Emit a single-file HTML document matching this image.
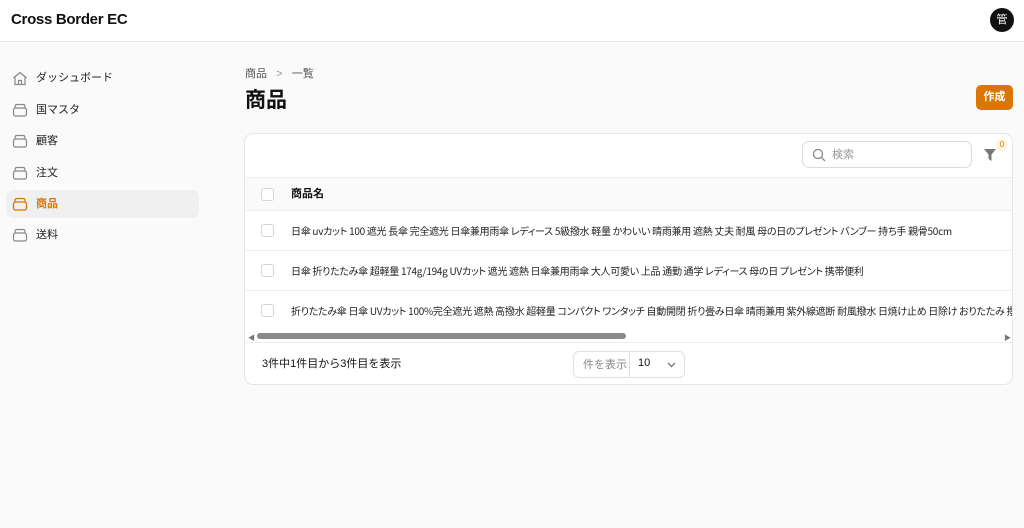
<!DOCTYPE html>
<html><head><meta charset="utf-8"><style>
*{box-sizing:border-box;margin:0;padding:0}
body{width:1024px;height:528px;overflow:hidden;background:#fafafa;font-family:"Liberation Sans","Noto Sans CJK JP",sans-serif;color:#111;position:relative}
.hdr{position:absolute;left:0;top:0;width:1024px;height:42px;background:#fff;border-bottom:1px solid #e8e8e8}
.logo{position:absolute;left:11px;top:11px;font-size:15px;font-weight:bold;letter-spacing:-0.3px}
.av{position:absolute;left:990px;top:8px;width:24px;height:24px;border-radius:50%;background:#111;color:#fff;font-size:11px;text-align:center;line-height:24px}
.nav{position:absolute;left:6px;width:193px;height:28px;border-radius:7px;font-size:11px;line-height:29px;padding-left:30px;color:#222}
.nav.act{background:#f0f0f0;color:#d97706;font-weight:bold}
.nav svg{position:absolute;left:6px;top:7px}
.crumb{position:absolute;left:245px;top:65px;font-size:11px;color:#555}
h1{position:absolute;left:245px;top:84px;font-size:21px;font-weight:bold}
.btn{position:absolute;left:976px;top:85px;width:37px;height:25px;background:#d97706;border-radius:5px;color:#fff;font-size:11px;font-weight:bold;text-align:center;line-height:25px}
.card{position:absolute;left:244px;top:133px;width:769px;height:252px;background:#fff;border:1px solid #e6e6e6;border-radius:9px;overflow:hidden}
.search{position:absolute;left:557px;top:7px;width:170px;height:27px;border:1px solid #dcdcdc;border-radius:7px;font-size:11px;color:#999;line-height:27px;padding-left:29px}
.search svg{position:absolute;left:9px;top:6px}
.th{position:absolute;left:0;top:43px;width:769px;height:34px;background:#fafafa;border-top:1px solid #eee;border-bottom:1px solid #eee;font-size:11px;font-weight:bold;line-height:33px;padding-left:46px}
.cb{position:absolute;left:16px;width:13px;height:13px;border:1px solid #d4d4d4;border-radius:3px;background:#fff}
.row{position:absolute;left:0;width:769px;height:40px;border-bottom:1px solid #eee;font-family:"Noto Sans CJK JP",sans-serif;font-feature-settings:"palt";font-size:10px;letter-spacing:-0.28px;line-height:40px;padding-left:46px;white-space:nowrap;color:#222}
.sb{position:absolute;left:12px;top:199px;width:369px;height:6px;border-radius:3px;background:#8a8a8a}
.ft{position:absolute;left:0;top:208px;width:769px;height:44px;border-top:1px solid #eee;font-size:11px}
.sel{position:absolute;left:328px;top:8px;width:112px;height:27px;border:1px solid #e0e0e0;border-radius:6px;font-size:11px}
</style></head><body>
<div class="hdr"><div class="logo">Cross Border EC</div><div class="av">管</div></div>
<div class="nav" style="top:64px"><svg width="16" height="15" viewBox="0 0 16 15" fill="none" stroke="#888" stroke-width="1.2"><path d="M1.5 7L8 1.5 14.5 7M3 6v7.5h10V6M6.5 13.5v-4h3v4"/></svg>ダッシュボード</div>
<div class="nav" style="top:96px"><svg width="16" height="14" viewBox="0 0 16 14" fill="none" stroke="#888" stroke-width="1.2"><rect x="1.5" y="5" width="13" height="8" rx="2"/><path d="M3 5V3.5Q3 1.5 5 1.5h6q2 0 2 2V5"/></svg>国マスタ</div>
<div class="nav" style="top:127px"><svg width="16" height="14" viewBox="0 0 16 14" fill="none" stroke="#888" stroke-width="1.2"><rect x="1.5" y="5" width="13" height="8" rx="2"/><path d="M3 5V3.5Q3 1.5 5 1.5h6q2 0 2 2V5"/></svg>顧客</div>
<div class="nav" style="top:159px"><svg width="16" height="14" viewBox="0 0 16 14" fill="none" stroke="#888" stroke-width="1.2"><rect x="1.5" y="5" width="13" height="8" rx="2"/><path d="M3 5V3.5Q3 1.5 5 1.5h6q2 0 2 2V5"/></svg>注文</div>
<div class="nav act" style="top:190px"><svg width="16" height="14" viewBox="0 0 16 14" fill="none" stroke="#d97706" stroke-width="1.3"><rect x="1.5" y="5" width="13" height="8" rx="2"/><path d="M3 5V3.5Q3 1.5 5 1.5h6q2 0 2 2V5"/></svg>商品</div>
<div class="nav" style="top:221px"><svg width="16" height="14" viewBox="0 0 16 14" fill="none" stroke="#888" stroke-width="1.2"><rect x="1.5" y="5" width="13" height="8" rx="2"/><path d="M3 5V3.5Q3 1.5 5 1.5h6q2 0 2 2V5"/></svg>送料</div>
<div class="crumb">商品 &nbsp;&nbsp;<span style="color:#999">&gt;</span>&nbsp;&nbsp; 一覧</div>
<h1>商品</h1>
<div class="btn">作成</div>
<div class="card">
<div class="search"><svg width="14" height="14" viewBox="0 0 14 14" fill="none" stroke="#888" stroke-width="1.3"><circle cx="6" cy="6" r="4.5"/><path d="M9.5 9.5L13 13"/></svg>検索</div>
<svg style="position:absolute;left:739px;top:15px" width="12" height="12" viewBox="0 0 12 12"><path d="M0 0h12L7.5 5.5V12L4.5 10V5.5z" fill="#777"/></svg>
<div style="position:absolute;left:751px;top:5px;width:12px;height:12px;border-radius:50%;background:#fdf3e0;color:#d97706;font-size:8px;text-align:center;line-height:12px">0</div>
<div class="th"><div class="cb" style="top:10px"></div>商品名</div>
<div class="row" style="top:77px"><div class="cb" style="top:13px"></div>日傘 uvカット 100 遮光 長傘 完全遮光 日傘兼用雨傘 レディース 5級撥水 軽量 かわいい 晴雨兼用 遮熱 丈夫 耐風 母の日のプレゼント バンブー 持ち手 親骨50cm</div>
<div class="row" style="top:117px"><div class="cb" style="top:13px"></div>日傘 折りたたみ傘 超軽量 174g/194g UVカット 遮光 遮熱 日傘兼用雨傘 大人可愛い 上品 通勤 通学 レディース 母の日 プレゼント 携帯便利</div>
<div class="row" style="top:157px;border:none"><div class="cb" style="top:13px"></div>折りたたみ傘 日傘 UVカット 100%完全遮光 遮熱 高撥水 超軽量 コンパクト ワンタッチ 自動開閉 折り畳み日傘 晴雨兼用 紫外線遮断 耐風撥水 日焼け止め 日除け おりたたみ 撥水</div>
<div style="position:absolute;left:3px;top:199px;font-size:7px;color:#777">◀</div>
<div style="position:absolute;left:759px;top:199px;font-size:7px;color:#777">▶</div>
<div class="sb"></div>
<div class="ft"><div style="position:absolute;left:17px;top:12px">3件中1件目から3件目を表示</div>
<div class="sel"><span style="position:absolute;left:9px;top:4px;color:#888">件を表示</span><div style="position:absolute;left:55px;top:0;height:25px;border-left:1px solid #e0e0e0"></div><span style="position:absolute;left:64px;top:5px">10</span><svg style="position:absolute;left:93px;top:10px" width="9" height="6" viewBox="0 0 9 6" fill="none" stroke="#666" stroke-width="1.2"><path d="M1 1l3.5 3.5L8 1"/></svg></div></div>
</div>
</body></html>
